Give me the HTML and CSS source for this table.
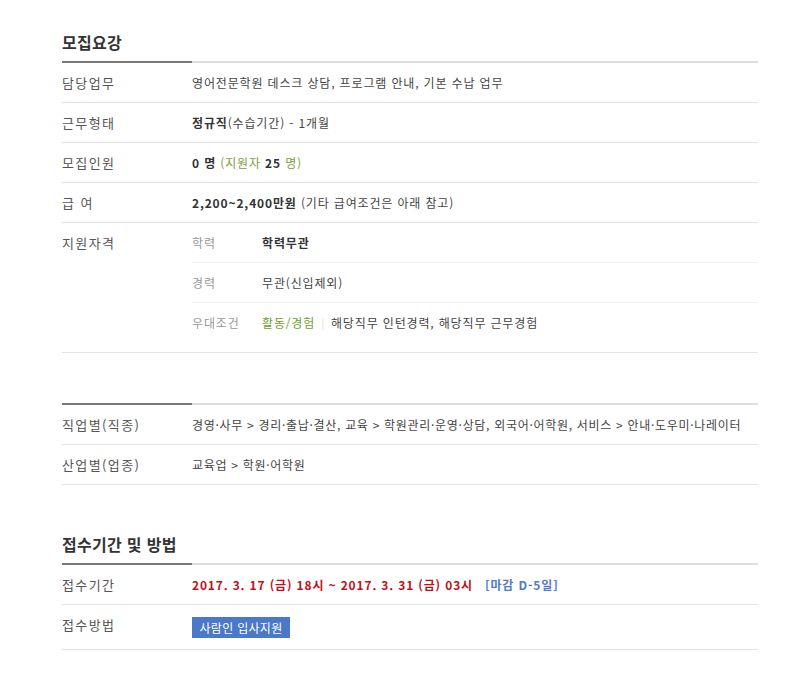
FILE: index.html
```html
<!DOCTYPE html>
<html lang="ko">
<head>
<meta charset="utf-8">
<title>모집요강</title>
<link rel="stylesheet" href="styles.css">
</head>
<body>
<div class="wrap">
  <section class="sec">
    <h2 class="sec-title">모집요강</h2>
    <div class="tabline"></div>
    <dl class="info">
      <div class="row"><dt>담당업무</dt><dd>영어전문학원 데스크 상담, 프로그램 안내, 기본 수납 업무</dd></div>
      <div class="row"><dt>근무형태</dt><dd><b>정규직</b>(수습기간) - 1개월</dd></div>
      <div class="row"><dt>모집인원</dt><dd><b>0 명</b> <span class="green">(지원자 <b class="dark">25</b> 명)</span></dd></div>
      <div class="row"><dt>급 여</dt><dd><b>2,200~2,400만원</b> (기타 급여조건은 아래 참고)</dd></div>
      <div class="row row-sub"><dt>지원자격</dt>
        <dd class="subs">
          <div class="sub"><span class="sub-k">학력</span><span class="sub-v"><b>학력무관</b></span></div>
          <div class="sub"><span class="sub-k">경력</span><span class="sub-v">무관(신입제외)</span></div>
          <div class="sub"><span class="sub-k">우대조건</span><span class="sub-v"><span class="green2">활동/경험</span><span class="bar">|</span>해당직무 인턴경력, 해당직무 근무경험</span></div>
        </dd>
      </div>
    </dl>
  </section>

  <section class="sec sec-2">
    <div class="tabline"></div>
    <dl class="info">
      <div class="row"><dt>직업별(직종)</dt><dd class="tight">경영·사무 &gt; 경리·출납·결산, 교육 &gt; 학원관리·운영·상담, 외국어·어학원, 서비스 &gt; 안내·도우미·나레이터</dd></div>
      <div class="row"><dt>산업별(업종)</dt><dd class="tight">교육업 &gt; 학원·어학원</dd></div>
    </dl>
  </section>

  <section class="sec sec-3">
    <h2 class="sec-title">접수기간 및 방법</h2>
    <div class="tabline"></div>
    <dl class="info">
      <div class="row"><dt>접수기간</dt><dd><span class="date">2017. 3. 17 (금) 18시 ~ 2017. 3. 31 (금) 03시</span><span class="dday">[마감 D-5일]</span></dd></div>
      <div class="row row-btn"><dt>접수방법</dt><dd><span class="apply">사람인 입사지원</span></dd></div>
    </dl>
  </section>
</div>
</body>
</html>
```

FILE: styles.css
```css
* { box-sizing: border-box; }
html, body {
  margin: 0;
  padding: 0;
  background: #fff;
}
body {
  font-family: "Noto Sans CJK KR", "Noto Sans", sans-serif;
  color: #333;
}
.wrap {
  width: 696px;
  margin-left: 62px;
}
.sec-title {
  margin: 0;
  padding: 32px 0 9px;
  font-size: 16px;
  line-height: 20px;
  font-weight: 700;
  color: #333;
  letter-spacing: 0.3px;
}
.sec-2 { margin-top: 50px; }
.sec-3 .sec-title { padding-top: 49px; }
.tabline {
  height: 2px;
  background: linear-gradient(to right, #777 0, #777 130px, #ddd 130px, #ddd 100%);
}
.info { margin: 0; }
.row {
  display: grid;
  grid-template-columns: 130px 1fr;
  border-bottom: 1px solid #e3e3e3;
}
.row dt {
  padding: 11px 0 10px;
  font-size: 13px;
  line-height: 18px;
  color: #555;
  letter-spacing: 1.4px;
}
.row dd {
  margin: 0;
  padding: 11px 0 10px;
  font-size: 12px;
  line-height: 18px;
  color: #444;
  letter-spacing: 0.85px;
}
.row dd.tight { letter-spacing: 0.7px; }
.row b { font-weight: 700; color: #333; }
.green { color: #78a03c; }
.green b.dark { color: #333; }
.green2 { color: #6f9e2e; }
.bar { color: #ddd; margin: 0 6px; font-size: 11px; }
.row-sub dd.subs { padding: 0 0 10px; }
.sub {
  display: flex;
  padding: 11px 0 10px;
  line-height: 18px;
  border-bottom: 1px solid #eee;
}
.sub:last-child { border-bottom: 0; }
.sub-k {
  width: 70px;
  flex: none;
  color: #999;
  font-size: 12px;
}
.sub-v { color: #444; font-size: 12px; }
.date {
  color: #c0101c;
  font-weight: 700;
}
.dday {
  color: #4f7acb;
  font-weight: 700;
  margin-left: 12px;
  letter-spacing: 0.9px;
}
.row-btn dd { padding: 12px 0 11px; }
.apply {
  display: inline-block;
  width: 98px;
  height: 21px;
  line-height: 21px;
  text-align: center;
  background: #4b78c8;
  color: #fff;
  font-size: 12px;
  letter-spacing: 0.3px;
  vertical-align: top;
}
```
